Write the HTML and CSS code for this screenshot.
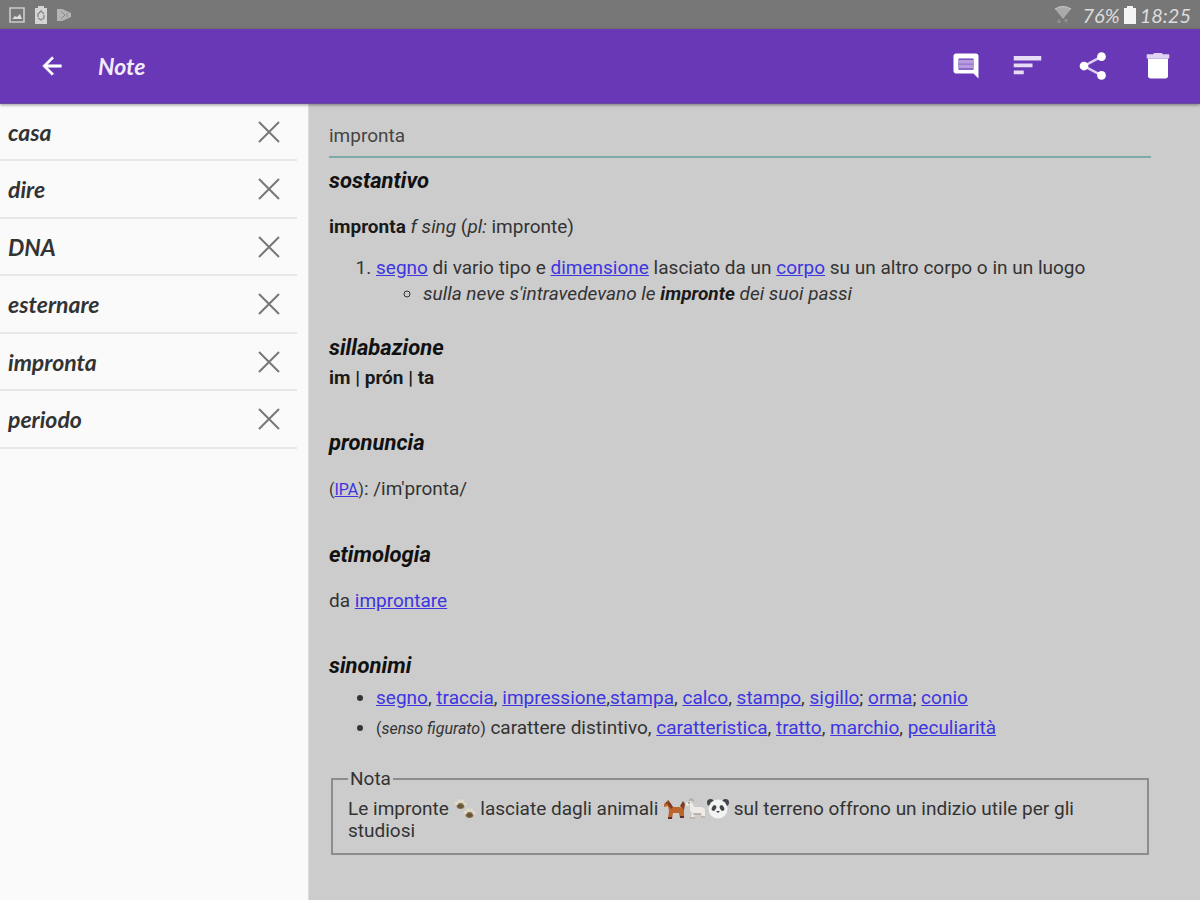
FILE: index.html
```
<!DOCTYPE html>
<html lang="it">
<head>
<meta charset="UTF-8">
<meta name="viewport" content="width=device-width, initial-scale=1.0">
<title>Note</title>
<link rel="stylesheet" href="styles.css">
</head>
<body>

<div class="status-bar">
  <div class="status-icons">
    <svg width="16" height="16" viewBox="0 0 16 16"><path d="M1 1h14v14H1z" fill="none" stroke="#ccc" stroke-width="1.6"/><path d="M3 12l3-3 2 1 3-3 2 5z" fill="#ddd"/></svg>
    <svg width="14" height="18" viewBox="0 0 14 18"><path d="M4 2V0h6v2h3v16H1V2z" fill="#d4d4d4"/><path d="M4 11V8l3-3 3 3M10 9v3l-3 2-3-2" fill="none" stroke="#888" stroke-width="1.4"/></svg>
    <svg width="14" height="12" viewBox="0 0 14 12"><path d="M0 0h5l9 4v4l-9 4H0z" fill="#b5b5b5"/><path d="M4 2l4 4-4 4M10 4v4" fill="none" stroke="#888"/></svg>
  </div>
  <div class="status-info">
    <svg width="18" height="18" viewBox="0 0 18 18"><path d="M1 3q8-5 16 0l-8 10z" fill="#aaa"/><path d="M1 3q8-5 16 0" fill="none" stroke="#ccc"/><path d="M5 13v4M3 15l2 2 2-2M12 17v-4M10 15l2-2 2 2" fill="none" stroke="#999"/></svg>
    <span class="battery-level">76%</span>
    <svg width="12" height="18" viewBox="0 0 12 18"><path d="M3 2V0h6v2h3v16H0V2z" fill="#f4f4f4"/></svg>
    <span>18:25</span>
  </div>
</div>

<header class="app-bar">
  <button class="icon-button" aria-label="Indietro">
    <svg width="28" height="28" viewBox="0 0 24 24"><path d="M20 11H7.830l5.590-5.590L12 4l-8 8 8 8 1.410-1.410L7.830 13H20z" stroke="#fff" stroke-width=".5"/></svg>
  </button>
  <h1 class="title">Note</h1>
  <div class="actions">
    <button class="icon-button" aria-label="Commento">
      <svg width="30" height="30" viewBox="0 0 24 24"><path fill-rule="evenodd" d="M22 22V4c0-1.100-.9-2-2-2H4c-1.100 0-2 .9-2 2v12c0 1.100.9 2 2 2h14zM6 6h12v9H6z"/><path d="M6 7h12v7H6z" fill="#b79de0"/><path d="M6 10.500h12" stroke="#9270ca" stroke-width="1"/></svg>
    </button>
    <button class="icon-button" aria-label="Ordina">
      <svg width="30" height="30" viewBox="0 0 24 24"><path d="M-1 4h22v3.500H-1zM-1 10h15v3H-1zM-1 15.500h8v3H-1z" fill="#e6dcf5"/></svg>
    </button>
    <button class="icon-button" aria-label="Condividi">
      <svg width="30" height="30" viewBox="0 0 24 24"><path d="M18 4.500L4 12l14 7.500" fill="none" stroke="#ddd0f0" stroke-width="2"/><circle cx="18" cy="4.500" r="3.500"/><circle cx="4" cy="12" r="3.500"/><circle cx="18" cy="19.500" r="3.500"/></svg>
    </button>
    <button class="icon-button" aria-label="Elimina">
      <svg width="30" height="30" viewBox="0 0 24 24"><path d="M4 6h16v14c0 1.200-.9 2-2 2H6c-1.100 0-2-.8-2-2z"/><path d="M3 2.500h5L9 1.500h6l1 1h5v3.500H3z" fill="#e0d4f2"/></svg>
    </button>
  </div>
</header>

<div class="content">
  <nav class="sidebar">
    <ul class="note-list">
      <li><a href="#casa">casa</a><button class="remove" aria-label="Rimuovi casa"><svg width="22" height="22" viewBox="0 0 22 22"><path d="M1 1l20 20M21 1L1 21"/></svg></button></li>
      <li><a href="#dire">dire</a><button class="remove" aria-label="Rimuovi dire"><svg width="22" height="22" viewBox="0 0 22 22"><path d="M1 1l20 20M21 1L1 21"/></svg></button></li>
      <li><a href="#dna">DNA</a><button class="remove" aria-label="Rimuovi DNA"><svg width="22" height="22" viewBox="0 0 22 22"><path d="M1 1l20 20M21 1L1 21"/></svg></button></li>
      <li><a href="#esternare">esternare</a><button class="remove" aria-label="Rimuovi esternare"><svg width="22" height="22" viewBox="0 0 22 22"><path d="M1 1l20 20M21 1L1 21"/></svg></button></li>
      <li><a href="#impronta">impronta</a><button class="remove" aria-label="Rimuovi impronta"><svg width="22" height="22" viewBox="0 0 22 22"><path d="M1 1l20 20M21 1L1 21"/></svg></button></li>
      <li><a href="#periodo">periodo</a><button class="remove" aria-label="Rimuovi periodo"><svg width="22" height="22" viewBox="0 0 22 22"><path d="M1 1l20 20M21 1L1 21"/></svg></button></li>
    </ul>
  </nav>

  <main class="entry">
    <input class="word" type="text" value="impronta" aria-label="Parola">

    <section>
      <h2>sostantivo</h2>
      <p><b>impronta</b> <i>f sing</i> (<i>pl:</i> impronte)</p>
      <ol>
        <li><a href="#">segno</a> di vario tipo e <a href="#">dimensione</a> lasciato da un <a href="#">corpo</a> su un altro corpo o in un luogo
          <ul class="examples">
            <li><i>sulla neve s'intravedevano le <b>impronte</b> dei suoi passi</i></li>
          </ul>
        </li>
      </ol>
    </section>

    <section>
      <h2>sillabazione</h2>
      <p class="syllables"><b>im | prón | ta</b></p>
    </section>

    <section>
      <h2>pronuncia</h2>
      <p><small>(<a href="#">IPA</a>)</small>: /im'pronta/</p>
    </section>

    <section>
      <h2>etimologia</h2>
      <p>da <a href="#">improntare</a></p>
    </section>

    <section>
      <h2>sinonimi</h2>
      <ul class="synonyms">
        <li><a href="#">segno</a>, <a href="#">traccia</a>, <a href="#">impressione</a>,<a href="#">stampa</a>, <a href="#">calco</a>, <a href="#">stampo</a>, <a href="#">sigillo</a>; <a href="#">orma</a>; <a href="#">conio</a></li>
        <li><small>(<i>senso figurato</i>)</small> carattere distintivo, <a href="#">caratteristica</a>, <a href="#">tratto</a>, <a href="#">marchio</a>, <a href="#">peculiarità</a></li>
      </ul>
    </section>

    <fieldset class="note">
      <legend>Nota</legend>
      Le impronte
      <svg class="emoji" viewBox="0 0 22 22"><g fill="#8c7a55"><ellipse cx="6.500" cy="8" rx="4" ry="3"/><ellipse cx="15.500" cy="17" rx="4" ry="3"/></g><g fill="#e4dcc8"><circle cx="2.500" cy="5.500" r="1.700"/><circle cx="5" cy="3" r="1.700"/><circle cx="8.500" cy="3" r="1.700"/><circle cx="11" cy="6" r="1.700"/><circle cx="11.500" cy="14.500" r="1.700"/><circle cx="14" cy="12" r="1.700"/><circle cx="17.500" cy="12" r="1.700"/><circle cx="20" cy="15" r="1.700"/></g><path d="M3 8q3.500-4 7 0-3.500 5-7 0M12 17q3.500-4 7 0-3.500 5-7 0" fill="#685637"/></svg>
      lasciate dagli animali
      <span class="animals"><svg class="emoji" viewBox="0 0 22 22"><path d="M1 6l4-4 3 4 2 3h7l4 2v9h-4l-1-5h-6l-1 6H5l1-8-1-5-4 1z" fill="#bd642c"/><path d="M5 2l3 4 2 3-2 2-3-4zM17 8l3-5 2 3-1 6z" fill="#7d3c20"/><path d="M5 19h4v2H5zM17 18h4v2h-4z" fill="#5a3022"/><circle cx="4" cy="5" r=".7" fill="#222"/></svg><svg class="emoji" viewBox="0 0 22 22"><path d="M1 5l4-2 3 3 1 3h8l3 2v9h-3l-1-5h-6l-1 6H6l1-6-2-3V7L1 8z" fill="#eeeae6"/><path d="M4 3l2-2 3 2M8 16h8M5 20h5M16 19h4" fill="none" stroke="#b3a89e" stroke-width="1.400"/><circle cx="4" cy="5" r=".7" fill="#333"/></svg><svg class="emoji" viewBox="0 0 22 22"><circle cx="3.500" cy="4.500" r="3.500" fill="#404548"/><circle cx="18.500" cy="4.500" r="3.500" fill="#404548"/><circle cx="11" cy="11" r="9.500" fill="#f3f3f3"/><ellipse cx="7" cy="10" rx="2" ry="3" transform="rotate(30 7 10)" fill="#404548"/><ellipse cx="15" cy="10" rx="2" ry="3" transform="rotate(-30 15 10)" fill="#404548"/><path d="M9 13h4l-2 2z" fill="#404548"/></svg></span>
      sul terreno offrono un indizio utile per gli studiosi
    </fieldset>
  </main>
</div>

</body>
</html>
```

FILE: styles.css
```
* {
  box-sizing: border-box;
}
body {
  margin: 0;
  min-height: 100vh;
  display: flex;
  flex-direction: column;
  font-family: Roboto, sans-serif;
  font-size: 19px;
  line-height: 22px;
  color: #333;
  background-color: #ccc;
}
h1, h2, p, ul, ol {
  margin: 0;
  padding: 0;
}
button {
  padding: 0;
  border: none;
  background: none;
  cursor: pointer;
}
svg {
  display: block;
  overflow: visible;
}
.status-bar {
  height: 29px;
  padding: 0 9px;
  display: flex;
  justify-content: space-between;
  align-items: center;
  background-color: #777;
  color: #ddd;
  font-family: Lato, sans-serif;
  font-style: italic;
  font-size: 20px;
}
.status-icons {
  display: flex;
  align-items: center;
  gap: 9px;
}
.status-info {
  display: flex;
  align-items: center;
  gap: 4px;
}
.battery-level {
  margin-left: 6px;
}
.app-bar {
  height: 75px;
  padding: 0 27px 0 38px;
  display: flex;
  align-items: center;
  background-color: #6938b6;
  border-bottom: 1px solid #6a4b9c;
  box-shadow: 0 1px 3px rgba(0, 0, 0, 0.4);
  z-index: 1;
}
.icon-button svg {
  fill: #fff;
}
.title {
  flex: 1;
  margin-left: 32px;
  font-family: Lato, sans-serif;
  font-style: italic;
  font-weight: bold;
  font-size: 23px;
  color: #f3eafc;
}
.actions {
  display: flex;
  gap: 34px;
}
.content {
  flex: 1;
  display: flex;
}
.sidebar {
  flex: 0 0 309px;
  padding-right: 11px;
  background-color: #fafafa;
  border-right: 1px solid #ddd;
}
.note-list {
  list-style: none;
}
.note-list li {
  height: 57px;
  padding: 0 17px 0 8px;
  display: flex;
  justify-content: space-between;
  align-items: center;
  border-bottom: 2px solid #e8e8e8;
}
.note-list li:nth-child(even) {
  height: 58px;
}
.note-list a {
  font-family: Lato, sans-serif;
  font-style: italic;
  font-weight: bold;
  font-size: 23px;
  color: #333;
  text-decoration: none;
}
.remove svg {
  fill: none;
  stroke: #777;
  stroke-width: 2;
}
.entry {
  flex: 1;
  padding: 10px 49px 40px 20px;
}
.word {
  display: block;
  width: 100%;
  height: 44px;
  margin-bottom: 11px;
  padding: 0;
  border: none;
  border-bottom: 2px solid #80aaa7;
  background: none;
  font-family: inherit;
  font-size: 19px;
  color: #444;
  outline: none;
}
section {
  margin-bottom: 42px;
}
section:first-of-type {
  margin-bottom: 31px;
}
h2 {
  font-size: 22px;
  line-height: 24px;
  font-style: italic;
  font-weight: bold;
  color: #111;
}
p {
  margin-top: 23px;
}
.syllables {
  margin-top: 7px;
}
b {
  color: #1a1a1a;
}
small {
  font-size: 16px;
}
a {
  color: #3d35e0;
}
ol {
  margin-top: 19px;
  padding-left: 47px;
}
.examples {
  margin-top: 4px;
  padding-left: 47px;
  list-style: circle;
}
.synonyms {
  margin-top: 9px;
  padding-left: 47px;
}
.synonyms li + li {
  margin-top: 8px;
}
.note {
  margin: -14px 2px 0;
  padding: 8px 15px 11px;
  border: 2px solid #8c8c8c;
}
.note legend {
  padding: 0 2px;
}
.emoji {
  display: inline-block;
  width: 22px;
  height: 22px;
  vertical-align: -5px;
}
.animals {
  white-space: nowrap;
}
```
